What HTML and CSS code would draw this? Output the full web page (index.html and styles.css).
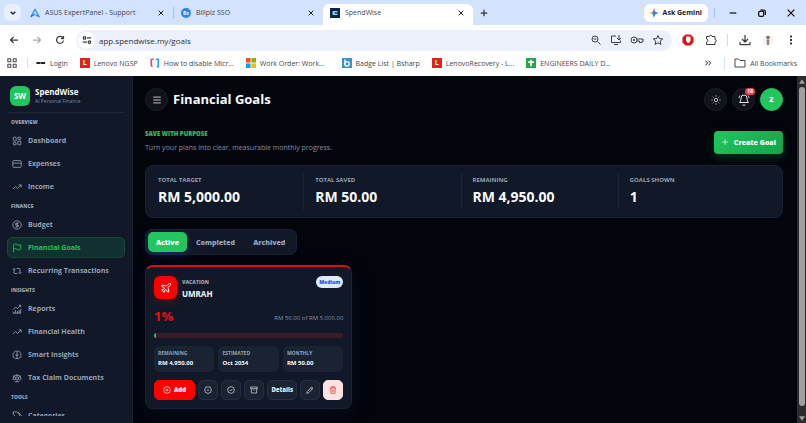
FILE: index.html
```html
<!DOCTYPE html>
<html lang="en">

<head>
    <meta charset="UTF-8">
    <meta name="viewport" content="width=device-width, initial-scale=1.0">
    <title>SpendWise</title>
    <link rel="stylesheet" href="styles.css">
</head>

<body>
    <!-- browser tabs -->
    <div class="tab-strip">
        <button class="tab-search" aria-label="Search tabs"><svg class="icon-8" viewBox="0 0 24 24"><path d="M5 8l7 7 7-7" stroke-width="4"/></svg></button>
        <div class="browser-tab">
            <svg class="favicon" viewBox="0 0 24 24"><path d="M2 21L12 3l10 18-8-4" stroke="#2f86f0" stroke-width="3"/><path d="M2 21l11-7" stroke="#1f6fe0" stroke-width="3"/></svg>
            <span>ASUS ExpertPanel - Support</span>
            <button class="close" aria-label="Close tab"><svg class="icon-8" viewBox="0 0 24 24"><path d="M5 5l14 14M19 5L5 19" stroke-width="3"/></svg></button>
        </div>
        <div class="browser-tab divided">
            <b class="favicon bz">Bz</b>
            <span>Billplz SSO</span>
            <button class="close" aria-label="Close tab"><svg class="icon-8" viewBox="0 0 24 24"><path d="M5 5l14 14M19 5L5 19" stroke-width="3"/></svg></button>
        </div>
        <div class="browser-tab current">
            <svg class="favicon" viewBox="0 0 24 24"><rect width="24" height="24" fill="#0b2447" stroke="none"/><path d="M18 7H8a2 2 0 0 0-2 2v6a2 2 0 0 0 2 2h10z" fill="#8fd0f5" stroke="none"/><path d="M11 12h8" stroke="#0b2447" stroke-width="3"/></svg>
            <span>SpendWise</span>
            <button class="close" aria-label="Close tab"><svg class="icon-8" viewBox="0 0 24 24"><path d="M5 5l14 14M19 5L5 19" stroke-width="3"/></svg></button>
        </div>
        <button class="new-tab" aria-label="New tab"><svg class="icon-10" viewBox="0 0 24 24"><path d="M12 4v16M4 12h16" stroke-width="3"/></svg></button>
        <button class="gemini">
            <svg class="icon-10" viewBox="0 0 24 24"><path d="M12 0l3 9-3 3-3-3z" fill="#ea5b4c" stroke="none"/><path d="M24 12l-9 3-3-3 3-3z" fill="#3d7ff0" stroke="none"/><path d="M12 24l-3-9 3-3 3 3z" fill="#35a853" stroke="none"/><path d="M0 12l9-3 3 3-3 3z" fill="#f4b820" stroke="none"/><circle cx="12" cy="12" r="4.5" fill="#3d7ff0" stroke="none"/></svg>
            Ask Gemini
        </button>
        <div class="window-buttons">
            <button aria-label="Minimize"><svg class="icon-10" viewBox="0 0 24 24"><path d="M4 12h16" stroke-width="3"/></svg></button>
            <button aria-label="Restore"><svg class="icon-10" viewBox="0 0 24 24"><rect x="4" y="8" width="12" height="12" rx="3" stroke-width="3"/><path d="M8 5h8a4 4 0 0 1 4 4v8" stroke-width="3"/></svg></button>
            <button aria-label="Close window"><svg class="icon-10" viewBox="0 0 24 24"><path d="M4 4l16 16M20 4L4 20" stroke-width="3"/></svg></button>
        </div>
    </div>

    <!-- address bar -->
    <div class="toolbar">
        <div class="nav-buttons">
            <button aria-label="Back"><svg class="icon-12" viewBox="0 0 24 24"><path d="M20 12H5M11 6l-6 6 6 6" stroke-width="2.5"/></svg></button>
            <button class="dim" aria-label="Forward"><svg class="icon-12" viewBox="0 0 24 24"><path d="M4 12h15M13 6l6 6-6 6" stroke-width="2.5"/></svg></button>
            <button aria-label="Reload"><svg class="icon-12" viewBox="0 0 24 24"><path d="M18 8a7 7 0 1 0 1 5M19 4v5h-5" stroke-width="2.5"/></svg></button>
        </div>
        <div class="omnibox">
            <button class="site-info" aria-label="Site information"><svg class="icon-10" viewBox="0 0 24 24"><circle cx="6" cy="7" r="3" stroke-width="3"/><path d="M12 7h10M2 17h10" stroke-width="3"/><circle cx="18" cy="17" r="3" stroke-width="3"/></svg></button>
            <input class="url" type="text" value="app.spendwise.my/goals" aria-label="Address">
            <button aria-label="Zoom"><svg class="icon-12" viewBox="0 0 24 24"><circle cx="10" cy="10" r="6"/><path d="M15 15l6 6M7 10h6"/></svg></button>
            <button aria-label="Install app"><svg class="icon-12" viewBox="0 0 24 24"><path d="M12 4H3v13h18v-4M8 21h8M18 2v9M14 8l4 4 4-4"/></svg></button>
            <button aria-label="Passwords"><svg class="icon-14" viewBox="0 0 28 24"><circle cx="8" cy="12" r="6"/><circle cx="8" cy="12" r="1.5"/><path d="M14 10h12v5h-2v2h-5v-3h-5"/></svg></button>
            <button aria-label="Bookmark"><svg class="icon-12" viewBox="0 0 24 24"><path d="M12 3l2.700 6.200 6.800.6-5.100 4.500 1.500 6.700-5.900-3.500L6.100 21l1.500-6.700-5.100-4.500 6.800-.6z"/></svg></button>
        </div>
        <div class="extensions">
            <button aria-label="Ad blocker"><svg class="icon-12" viewBox="0 0 24 24"><path d="M7 1h10l6 6v10l-6 6H7l-6-6V7z" fill="#d9141c" stroke="none"/><path d="M8 7v6l3 5h3l3-5V7l-2-2H9z" fill="#fff" stroke="none"/></svg></button>
            <button class="split" aria-label="Extensions"><svg class="icon-12" viewBox="0 0 24 24"><path d="M3 5h6a2.500 2.500 0 0 1 5 0h6v6a2.500 2.500 0 0 1 0 5v5H3v-5a3 3 0 0 0 0-6z"/></svg></button>
            <button aria-label="Downloads"><svg class="icon-12" viewBox="0 0 24 24"><path d="M12 2v13M6 10l6 6 6-6M2 16v5h20v-5" stroke-width="2.5"/></svg></button>
            <button aria-label="Profile"><svg class="icon-12" viewBox="0 0 24 24"><circle cx="12" cy="12" r="11" fill="#f4f3f3" stroke="none"/><circle cx="12" cy="7" r="3.5" fill="#9b5f57" stroke="none"/><path d="M9 11h6l-1 11h-4z" fill="#888" stroke="none"/></svg></button>
            <button aria-label="Menu"><svg class="icon-12" viewBox="0 0 24 24"><path d="M12 3v4M12 10v4M12 17v4" stroke-width="4"/></svg></button>
        </div>
    </div>

    <!-- bookmarks -->
    <div class="bookmarks">
        <button class="apps" aria-label="Apps"><svg class="icon-10" viewBox="0 0 24 24"><path d="M2 2h7v7H2zM15 2h7v7h-7zM2 15h7v7H2zM15 15h7v7h-7z" stroke-width="2.5"/></svg></button>
        <a href="#"><svg class="icon-10" viewBox="0 0 24 24"><path d="M1 12h22" stroke="#222" stroke-width="5" stroke-dasharray="10 1"/></svg>Login</a>
        <a href="#"><b class="lenovo">L</b>Lenovo NGSP</a>
        <a href="#"><svg class="icon-10" viewBox="0 0 24 24"><path d="M9 3H3v15l3 3" stroke="#e9477c" stroke-width="4"/><path d="M14 3h6v18h-4" stroke="#2f9be0" stroke-width="4"/></svg>How to disable Micr...</a>
        <a class="work-order" href="#"><svg class="icon-10" viewBox="0 0 24 24"><g stroke="none"><path d="M0 0h11v11H0z" fill="#f25022"/><path d="M13 0h11v11H13z" fill="#7fba00"/><path d="M0 13h11v11H0z" fill="#00a4ef"/><path d="M13 13h11v11H13z" fill="#ffb900"/></g></svg>Work Order: Work...</a>
        <a href="#"><svg class="icon-10" viewBox="0 0 24 24"><path d="M0 0h24v24H0z" fill="#3f8fc9" stroke="none"/><path d="M7 3v12" stroke="#fff" stroke-width="3"/><circle cx="12" cy="14" r="5.5" stroke="#fff" stroke-width="3"/></svg>Badge List | Bsharp</a>
        <a href="#"><b class="lenovo">L</b>LenovoRecovery - L...</a>
        <a href="#"><svg class="icon-10" viewBox="0 0 24 24"><path d="M0 0h24v24H0z" fill="#28a34a" stroke="none"/><path d="M12 4v16M5 10h14" stroke="#fff" stroke-width="4"/></svg>ENGINEERS DAILY D...</a>
        <button class="more" aria-label="More bookmarks"><svg class="icon-8" viewBox="0 0 24 24"><path d="M4 5l7 7-7 7M13 5l7 7-7 7" stroke-width="3"/></svg></button>
        <a class="all-bookmarks" href="#"><svg class="icon-12" viewBox="0 0 24 24"><path d="M2 4h7l3 3h10v13H2z"/></svg>All Bookmarks</a>
    </div>

    <div class="app">
        <aside class="sidebar">
            <div class="brand">
                <b class="brand-logo">SW</b>
                <div>
                    <p class="brand-name">SpendWise</p>
                    <p class="brand-sub">AI Personal Finance</p>
                </div>
            </div>
            <nav class="menu">
                <h2>OVERVIEW</h2>
                <a href="#"><svg class="icon-10" viewBox="0 0 24 24"><rect x="3" y="3" width="7" height="9" rx="1"/><rect x="14" y="3" width="7" height="5" rx="1"/><rect x="14" y="12" width="7" height="9" rx="1"/><rect x="3" y="16" width="7" height="5" rx="1"/></svg>Dashboard</a>
                <a href="#"><svg class="icon-10" viewBox="0 0 24 24"><rect x="2" y="4" width="20" height="16" rx="2"/><path d="M2 10h20"/></svg>Expenses</a>
                <a href="#"><svg class="icon-10" viewBox="0 0 24 24"><path d="M2 17l6.500-6.500 5 5L22 7M16 7h6v6"/></svg>Income</a>
                <h2>FINANCE</h2>
                <a href="#"><svg class="icon-10" viewBox="0 0 24 24"><circle cx="12" cy="12" r="10"/><path d="M16 8h-6a2 2 0 1 0 0 4h4a2 2 0 1 1 0 4H8M12 18V6"/></svg>Budget</a>
                <a class="selected" href="#"><svg class="icon-10" viewBox="0 0 24 24"><path d="M4 22V4c2-2 5-2 8 0s6 2 9 0v11c-3 2-6 2-9 0s-6-2-8 0"/></svg>Financial Goals</a>
                <a href="#"><svg class="icon-10" viewBox="0 0 24 24"><path d="M2 9l3-3 3 3M13 18H7a2 2 0 0 1-2-2V6M22 15l-3 3-3-3M11 6h6a2 2 0 0 1 2 2v10"/></svg>Recurring Transactions</a>
                <h2>INSIGHTS</h2>
                <a href="#"><svg class="icon-10" viewBox="0 0 24 24"><path d="M3 13l6-6 4 4 8-8M16 3h5v5M3 22v-4M8 22v-8M13 22v-5M17 22v-8M21 22V12M3 22h18"/></svg>Reports</a>
                <a href="#"><svg class="icon-10" viewBox="0 0 24 24"><path d="M2 17l6.500-6.500 5 5L22 7M16 7h6v6"/></svg>Financial Health</a>
                <a href="#"><svg class="icon-10" viewBox="0 0 24 24"><path d="M12 4a4 4 0 0 0-7 2 5 5 0 0 0-2 7 4 4 0 0 0 3 6 4 4 0 0 0 6 1 4 4 0 0 0 6-1 4 4 0 0 0 3-6 5 5 0 0 0-2-7 4 4 0 0 0-7-2zM12 4v16M8 12h8"/></svg>Smart Insights</a>
                <a href="#"><svg class="icon-10" viewBox="0 0 24 24"><path d="M12 3v18M7 21h10M3 7h3l6-2 6 2h3M5 7l-3 8c2 2 5 2 7 0L6 7M18 7l-3 8c2 2 5 2 7 0l-3-8"/></svg>Tax Claim Documents</a>
                <h2>TOOLS</h2>
                <a href="#"><svg class="icon-10" viewBox="0 0 24 24"><path d="M9 2H3v6l9 9 7-7-8-8zM14 2l8 8c1 1 1 2 0 3l-7 7"/></svg>Categories</a>
            </nav>
        </aside>

        <main class="content">
            <header class="page-header">
                <button class="round" aria-label="Toggle menu"><svg class="icon-10" viewBox="0 0 24 24"><path d="M3 5h18M3 12h18M3 19h18"/></svg></button>
                <h1>Financial Goals</h1>
                <button class="round" aria-label="Theme"><svg class="icon-10" viewBox="0 0 24 24"><circle cx="12" cy="12" r="4"/><path d="M12 1v3M12 20v3M4.200 4.200l2 2M17.800 17.800l2 2M1 12h3M20 12h3M6.200 17.800l-2 2M19.800 4.200l-2 2"/></svg></button>
                <button class="round bell" aria-label="Notifications"><svg class="icon-12" viewBox="0 0 24 24"><path d="M10 21a2 2 0 0 0 4 0M3 17h18c-2-2-3-3-3-9a6 6 0 0 0-12 0c0 6-1 7-3 9zM2 8c0-2 1-4 2-5M22 8c0-2-1-4-2-5"/></svg><span class="count">18</span></button>
                <button class="round avatar">Z</button>
            </header>

            <section class="intro">
                <div>
                    <p class="eyebrow">SAVE WITH PURPOSE</p>
                    <p class="lead">Turn your plans into clear, measurable monthly progress.</p>
                </div>
                <button class="create"><svg class="icon-8" viewBox="0 0 24 24"><path d="M12 3v18M3 12h18"/></svg>Create Goal</button>
            </section>

            <section class="totals">
                <div><h3>TOTAL TARGET</h3><p>RM 5,000.00</p></div>
                <div><h3>TOTAL SAVED</h3><p>RM 50.00</p></div>
                <div><h3>REMAINING</h3><p>RM 4,950.00</p></div>
                <div><h3>GOALS SHOWN</h3><p>1</p></div>
            </section>

            <div class="filters">
                <button class="on">Active</button>
                <button>Completed</button>
                <button>Archived</button>
            </div>

            <section class="goals">
                <article class="goal">
                    <div class="goal-head">
                        <span class="goal-icon"><svg class="icon-12" viewBox="0 0 24 24"><path d="M17.800 19.200L16 11l3.500-3.500C21 6 21.500 4 21 3c-1-.5-3 0-4.500 1.500L13 8 4.800 6.200c-.5-.1-.9.1-1.100.5l-.3.5c-.2.500-.1 1 .3 1.300L9 12l-2 3H4l-1 1 3 2 2 3 1-1v-3l3-2 3.500 5.300c.3.4.8.5 1.300.3l.5-.2c.4-.3.6-.7.5-1.200z"/></svg></span>
                        <div>
                            <h3>VACATION</h3>
                            <p class="goal-name">UMRAH</p>
                        </div>
                        <span class="priority">Medium</span>
                    </div>
                    <div class="goal-amount">
                        <strong>1%</strong>
                        <span>RM 50.00 of RM 5,000.00</span>
                    </div>
                    <div class="bar"><div class="bar-fill" style="width: 1%"></div></div>
                    <div class="facts">
                        <div><h4>REMAINING</h4><p>RM 4,950.00</p></div>
                        <div><h4>ESTIMATED</h4><p>Oct 2034</p></div>
                        <div><h4>MONTHLY</h4><p>RM 50.00</p></div>
                    </div>
                    <div class="actions">
                        <button class="add"><svg class="icon-8" viewBox="0 0 24 24"><circle cx="12" cy="12" r="10"/><path d="M8 12h8M12 8v8"/></svg>Add</button>
                        <button aria-label="Withdraw"><svg class="icon-8" viewBox="0 0 24 24"><circle cx="12" cy="12" r="10"/><path d="M8 12h8"/></svg></button>
                        <button aria-label="Complete"><svg class="icon-8" viewBox="0 0 24 24"><circle cx="12" cy="12" r="10"/><path d="M8 12l3 3 5-6"/></svg></button>
                        <button aria-label="Archive"><svg class="icon-8" viewBox="0 0 24 24"><path d="M2 3h20v5H2zM4 8v13h16V8M10 12h4"/></svg></button>
                        <button class="details">Details</button>
                        <button aria-label="Edit"><svg class="icon-8" viewBox="0 0 24 24"><path d="M17 3l4 4L8 20l-6 2 2-6zM14 6l4 4"/></svg></button>
                        <button class="delete" aria-label="Delete"><svg class="icon-8" viewBox="0 0 24 24"><path d="M3 6h18M5 6l1 16h12l1-16M8 6V2h8v4M10 11v6M14 11v6"/></svg></button>
                    </div>
                </article>
            </section>
        </main>

        <div class="scrollbar">
            <svg class="arrow" viewBox="0 0 8 6"><path d="M4 0l4 6H0z"/></svg>
            <div class="thumb"></div>
            <svg class="arrow" viewBox="0 0 8 6"><path d="M0 0h8L4 6z"/></svg>
        </div>
    </div>
</body>

</html>
```
FILE: styles.css
```css
* {
    box-sizing: border-box;
    margin: 0;
    padding: 0;
}

body {
    display: flex;
    flex-direction: column;
    height: 100vh;
    overflow: hidden;
    background: #fff;
    font-family: "Open Sans", "Noto Sans", sans-serif;
    font-size: 7px;
    color: #45484d;
}

button,
input {
    border: 0;
    background: none;
    font: inherit;
    color: inherit;
}

button {
    display: flex;
    align-items: center;
    justify-content: center;
    white-space: nowrap;
}

a {
    color: inherit;
    text-decoration: none;
    white-space: nowrap;
}

svg {
    flex: none;
    fill: none;
    stroke: currentColor;
    stroke-width: 2;
    stroke-linejoin: round;
}

.icon-8 {
    width: 8px;
    height: 8px;
}

.icon-10 {
    width: 10px;
    height: 10px;
}

.icon-12 {
    width: 12px;
    height: 12px;
}

.icon-14 {
    width: 14px;
    height: 12px;
}

/* tabs */
.tab-strip {
    display: flex;
    flex: none;
    align-items: center;
    height: 25px;
    padding: 0 8px 0 4px;
    background: #d3e2fd;
}

.tab-search {
    width: 17px;
    height: 17px;
    margin-right: 2px;
    border-radius: 6px;
    background: #e8f0fe;
    color: #222;
}

.browser-tab {
    display: flex;
    flex: 0 1 150px;
    align-items: center;
    gap: 5px;
    height: 12px;
    padding: 0 8px 0 7px;
    white-space: nowrap;
}

.browser-tab.divided {
    border-left: 1px solid #a9c3f0;
}

.browser-tab.current {
    align-self: flex-end;
    height: 21px;
    padding-bottom: 4px;
    border-radius: 6px 6px 0 0;
    background: #fff;
}

.favicon {
    width: 10px;
    height: 10px;
}

.bz {
    border-radius: 50%;
    background: #2f80ed;
    color: #fff;
    font-size: 5px;
    line-height: 10px;
    text-align: center;
}

.close {
    margin-left: auto;
    color: #222;
}

.new-tab {
    margin: 0 auto 0 6px;
    color: #333;
}

.gemini {
    gap: 4px;
    height: 18px;
    padding: 0 6px 0 5px;
    border-radius: 6px;
    background: #fff;
    color: #222;
    font-weight: 700;
}

.window-buttons {
    display: flex;
    gap: 19px;
    margin-left: 6px;
    padding: 0 2px 0 13px;
    border-left: 1px solid #a9c3f0;
    color: #111;
}

/* address bar */
.toolbar {
    display: flex;
    flex: none;
    align-items: center;
    gap: 10px;
    height: 30px;
    padding: 0 9px 0 8px;
    color: #3c3f43;
}

.nav-buttons,
.extensions {
    display: flex;
    align-items: center;
    gap: 11px;
}

.dim {
    color: #a8abb0;
}

.omnibox {
    display: flex;
    flex: 1;
    align-items: center;
    gap: 8px;
    height: 21px;
    padding: 0 8px 0 2px;
    border-radius: 11px;
    background: #ebf0fa;
}

.site-info {
    width: 17px;
    height: 17px;
    margin-right: -4px;
    border-radius: 50%;
    background: #fff;
}

.url {
    flex: 1;
    min-width: 0;
    color: #303236;
    font-size: 8px;
}

.extensions .split {
    padding-right: 10px;
    border-right: 1px solid #c8dafa;
}

/* bookmarks */
.bookmarks {
    display: flex;
    flex: none;
    align-items: center;
    gap: 12px;
    height: 21px;
    padding: 0 9px 5px 7px;
}

.bookmarks a {
    display: flex;
    align-items: center;
    gap: 4px;
}

.bookmarks .work-order {
    padding-right: 5px;
}

.apps {
    margin-right: -4px;
    padding-right: 10px;
    border-right: 1px solid #d3e2fd;
}

.lenovo {
    width: 10px;
    background: #e2231a;
    color: #fff;
    line-height: 10px;
    text-align: center;
}

.more {
    margin-left: auto;
    color: #222;
}

.bookmarks .all-bookmarks {
    padding-left: 9px;
    border-left: 1px solid #d3e2fd;
}

/* app */
.app {
    display: flex;
    flex: 1;
    min-height: 0;
    background: #03050d;
    color: #f8fafc;
}

.sidebar {
    display: flex;
    flex: none;
    flex-direction: column;
    width: 133px;
    padding: 0 7px 7px;
    background: #111827;
    border-right: 1px solid #1a2233;
}

.brand {
    display: flex;
    flex: none;
    align-items: center;
    gap: 5px;
    height: 37px;
    padding: 3px 3px 0;
    border-bottom: 1px solid #1f2937;
}

.brand-logo {
    width: 20px;
    border-radius: 6px;
    background: #22c55e;
    font-size: 8px;
    line-height: 20px;
    text-align: center;
}

.brand-name {
    font-size: 8px;
    font-weight: 700;
    line-height: 11px;
}

.brand-sub {
    color: #7f8ba0;
    font-size: 5px;
    line-height: 9px;
}

.menu {
    display: flex;
    flex-direction: column;
    gap: 2px;
    padding-top: 2px;
    overflow: hidden;
    color: #94a3b8;
}

.menu h2 {
    flex: none;
    height: 13px;
    padding: 2px 4px 0;
    font-size: 5px;
    font-weight: 800;
    line-height: 11px;
}

.menu a {
    display: flex;
    flex: none;
    align-items: center;
    gap: 6px;
    height: 21px;
    padding: 0 4px;
    border: 1px solid transparent;
    border-radius: 5px;
    font-weight: 700;
}

.menu .selected {
    border-color: #17493a;
    background: #12302f;
    color: #22c55e;
}

.content {
    flex: 1;
    min-width: 0;
    padding: 12px 14px 0 12px;
}

.page-header {
    display: flex;
    align-items: center;
    gap: 5px;
}

.page-header h1 {
    flex: 1;
    font-size: 13px;
    line-height: 23px;
}

.round {
    width: 23px;
    height: 23px;
    border: 1px solid #1b1f28;
    border-radius: 50%;
    background: #10131b;
    color: #e5e7eb;
}

.bell {
    position: relative;
}

.count {
    position: absolute;
    top: -1px;
    right: -1px;
    padding: 0 2px;
    border-radius: 4px;
    background: #ef4444;
    color: #fff;
    font-size: 5px;
    font-weight: 700;
    line-height: 7px;
}

.round.avatar {
    border-color: #22c55e;
    background: #22c55e;
    color: #fff;
    font-size: 7px;
    font-weight: 800;
}

.intro {
    display: flex;
    align-items: center;
    justify-content: space-between;
    margin-top: 19px;
}

.eyebrow {
    color: #22c55e;
    font-size: 6px;
    font-weight: 800;
    line-height: 8px;
}

.lead {
    margin-top: 4px;
    color: #8490a3;
    line-height: 12px;
}

.create {
    gap: 5px;
    height: 23px;
    padding: 0 7px;
    border-radius: 4px;
    background: linear-gradient(135deg, #22c55e, #16a34a);
    box-shadow: 0 4px 9px #16a34a40;
    font-weight: 800;
}

.totals {
    display: grid;
    grid-template-columns: repeat(4, 1fr);
    gap: 5px;
    margin-top: 11px;
    padding: 7px 6px;
    border: 1px solid #192233;
    border-radius: 8px;
    background: #111827;
}

.totals div {
    padding: 3px 6px;
    border-right: 1px solid #1b2535;
}

.totals div:last-child {
    border-right: 0;
}

h3 {
    color: #94a3b8;
    font-size: 5px;
    font-weight: 800;
    line-height: 8px;
}

.totals h3 {
    font-size: 6px;
    font-weight: 700;
}

.totals p {
    margin-top: 3px;
    font-size: 14px;
    font-weight: 700;
    line-height: 20px;
}

.filters {
    display: inline-flex;
    margin-top: 11px;
    padding: 2px;
    border: 1px solid #192233;
    border-radius: 7px;
    background: #111827;
    color: #94a3b8;
}

.filters button {
    height: 20px;
    padding: 0 9px;
    border-radius: 5px;
    font-weight: 800;
}

.filters .on {
    padding: 0 8px;
    background: #22c55e;
    box-shadow: 0 3px 8px #2563eb40;
    color: #fff;
}

.goals {
    display: grid;
    grid-template-columns: repeat(3, 1fr);
    gap: 8px;
    margin-top: 10px;
}

.goal {
    padding: 9px 8px 8px;
    border: 1px solid #192233;
    border-top: 2px solid #e00d12;
    border-radius: 8px;
    background: #111827;
    box-shadow: 0 6px 16px #0f172a60;
}

.goal-head {
    display: flex;
    align-items: flex-start;
    gap: 5px;
}

.goal-icon {
    display: grid;
    place-items: center;
    width: 23px;
    height: 23px;
    border-radius: 6px;
    background: #ff0000;
    box-shadow: 0 3px 8px #ff000040;
}

.goal-head h3 {
    margin-top: 2px;
}

.goal-name {
    font-size: 8px;
    font-weight: 700;
    line-height: 15px;
}

.priority {
    margin-left: auto;
    padding: 0 3px;
    border-radius: 6px;
    background: #dbeafe;
    color: #2550e0;
    font-size: 5px;
    font-weight: 800;
    line-height: 12px;
}

.goal-amount {
    display: flex;
    align-items: center;
    justify-content: space-between;
    margin-top: 6px;
}

.goal-amount strong {
    color: #f20d12;
    font-size: 13px;
    line-height: 18px;
}

.goal-amount span {
    padding-top: 4px;
    color: #8490a3;
    font-size: 6px;
}

.bar {
    height: 5px;
    margin-top: 8px;
    overflow: hidden;
    border-radius: 3px;
    background: #3b1b29;
}

.bar-fill {
    height: 100%;
    background: #22c55e;
}

.facts {
    display: grid;
    grid-template-columns: repeat(3, 1fr);
    gap: 4px;
    margin-top: 8px;
}

.facts div {
    padding: 3px 4px;
    border-radius: 5px;
    background: #1a2332;
}

.facts h4 {
    color: #94a3b8;
    font-size: 5px;
    line-height: 8px;
}

.facts p {
    font-size: 6px;
    font-weight: 700;
    line-height: 12px;
}

.actions {
    display: flex;
    gap: 3px;
    margin-top: 8px;
}

.actions button {
    flex: 1 0 20px;
    height: 20px;
    border: 1px solid #243041;
    border-radius: 5px;
    background: #1a2332;
    color: #e2e8f0;
    font-size: 6px;
    font-weight: 800;
}

.actions .add {
    flex-basis: 41px;
    gap: 3px;
    border-color: #ff0000;
    background: #ff0000;
    color: #fff;
}

.actions .details {
    flex-basis: 30px;
}

.actions .delete {
    border-color: #fee2e2;
    background: #fee2e2;
    color: #dc2626;
}

/* page scrollbar */
.scrollbar {
    display: flex;
    flex: none;
    flex-direction: column;
    align-items: center;
    gap: 3px;
    width: 9px;
    padding: 3px 0 2px;
    background: #2c2c2c;
}

.thumb {
    flex: 1;
    width: 6px;
    margin-bottom: 7px;
    border-radius: 3px;
    background: #9f9f9f;
}

.arrow {
    width: 6px;
    height: 5px;
    fill: #9f9f9f;
    stroke: none;
}
```
